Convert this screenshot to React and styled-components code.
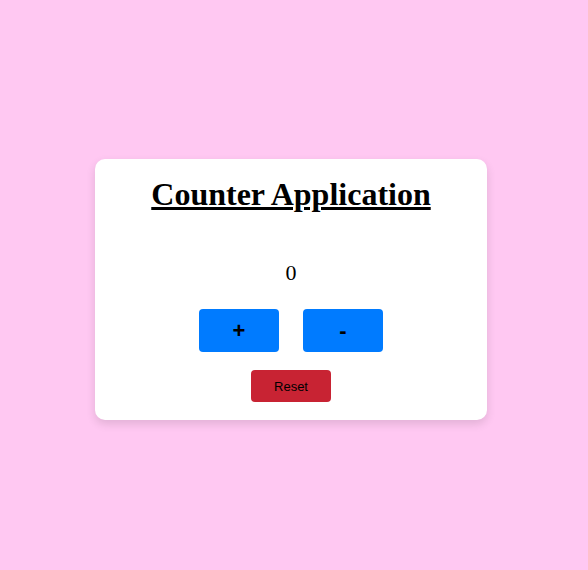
import React, {useState} from 'react';
import styled, {createGlobalStyle} from 'styled-components';

const GlobalStyle = createGlobalStyle`
    body {
        margin: 0;
        background-color: #ffc8f2;
        font-family: "Liberation Serif", "Times New Roman", serif;
    }
`;

const Page = styled.div`
    min-height: 100vh;
    box-sizing: border-box;
    display: flex;
    align-items: center;
    justify-content: center;
    padding: 9px 6px 0 0;
`;

const Card = styled.div`
    width: 392px;
    height: 261px;
    box-sizing: border-box;
    background-color: white;
    border-radius: 10px;
    box-shadow: 0 4px 10px rgba(0, 0, 0, 0.12);
    display: flex;
    flex-direction: column;
    align-items: center;
    padding-top: 17px;
`;

const Title = styled.h1`
    margin: 0;
    font-size: 32px;
    line-height: 37px;
    font-weight: bold;
    text-decoration: underline;
    color: black;
`;

const Count = styled.p`
    margin: 46px 0 0;
    font-size: 22px;
    line-height: 28px;
`;

const ButtonRow = styled.div`
    display: flex;
    gap: 24px;
    margin-top: 22px;
`;

const Button = styled.button`
    width: 80px;
    height: ${props => props.$small ? 32 : 43}px;
    border: none;
    border-radius: 4px;
    background-color: ${props => props.$color};
    color: black;
    font-family: "Liberation Sans", Arial, sans-serif;
    font-size: ${props => props.$small ? 13 : 22}px;
    font-weight: ${props => props.$small ? 'normal' : 'bold'};
    cursor: pointer;
    padding: 0;
`;

const ResetButton = styled(Button)`
    margin-top: 18px;
`;

const App = () => {
    const [count, setCount] = useState(0);

    return (
        <>
            <GlobalStyle/>
            <Page>
                <Card>
                    <Title>Counter Application</Title>
                    <Count>{count}</Count>
                    <ButtonRow>
                        <Button $color="#007bff" onClick={() => setCount(count + 1)}>+</Button>
                        <Button $color="#007bff" onClick={() => setCount(count - 1)}>-</Button>
                    </ButtonRow>
                    <ResetButton $small $color="#c82333" onClick={() => setCount(0)}>Reset</ResetButton>
                </Card>
            </Page>
        </>
    );
};

export default App;
